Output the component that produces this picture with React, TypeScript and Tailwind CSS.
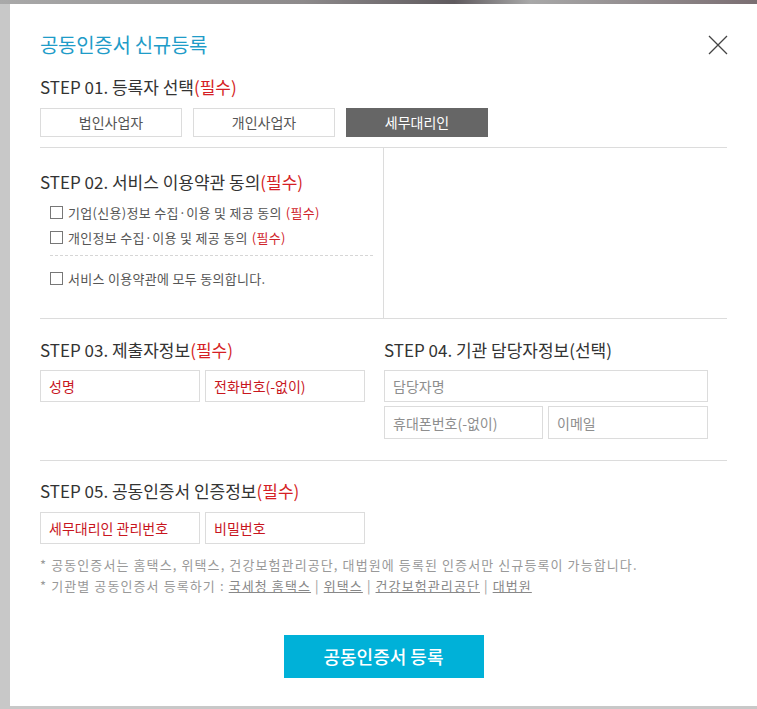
import { useState } from 'react';

const registrants = ['법인사업자', '개인사업자', '세무대리인'];

function Req({ small }: { small?: boolean }) {
  return <span className={small ? 'text-[#d0242b]' : 'text-[#d51f26]'}>(필수)</span>;
}

function Field({ placeholder, required, className }: { placeholder: string; required?: boolean; className?: string }) {
  return (
    <input
      placeholder={placeholder}
      className={`border border-[#dcdcdc] pl-[8px] text-[14px] outline-none ${
        required ? 'placeholder:text-[#c8161e]' : 'placeholder:text-[#8e8e8e]'
      } ${className || ''}`}
    />
  );
}

function Check({ label, required }: { label: string; required?: boolean }) {
  return (
    <label className="flex items-center h-[25px] text-[13px] text-[#555] tracking-[0.3px]">
      <span className="w-[13px] h-[13px] border border-[#777] mr-[5px] bg-white" />
      {label}
      {required && (
        <span className="ml-[4px]">
          <Req small />
        </span>
      )}
    </label>
  );
}

export default function App() {
  const [who, setWho] = useState(2);

  return (
    <div
      className="w-[757px] h-[709px] overflow-hidden bg-[#c8c8c8]"
      style={{ fontFamily: '"Noto Sans CJK KR", "Noto Sans", sans-serif' }}
    >
      {/* dimmed page strip behind the modal */}
      <div className="h-[4px] bg-[linear-gradient(90deg,#a9a9a9,#8d8a8b_40%,#5f5a5e_60%,#a8a8a8_70%,#7a6e72)]" />
      <div className="pl-[10px]">
        <div className="relative w-[747px] h-[702px] bg-white px-[30px] pt-[26px]">
          {/* Title */}
          <h1 className="h-[30px] leading-[30px] text-[20px] text-[#1f9cc8] tracking-[-0.3px]">
            공동인증서 신규등록
          </h1>
          <button className="absolute right-[29px] top-[31px] w-[20px] h-[20px]">
            <svg viewBox="0 0 20 20" className="w-[20px] h-[20px]" fill="none" stroke="#444" strokeWidth="1.3">
              <path d="M1 1 L19 19 M19 1 L1 19" />
            </svg>
          </button>

          {/* Step 01 */}
          <h2 className="mt-[15px] h-[24px] leading-[24px] text-[17px] text-[#333]">
            STEP 01. 등록자 선택<Req />
          </h2>
          <div className="flex gap-[11px] mt-[9px]">
            {registrants.map((r, i) => (
              <button
                key={r}
                onClick={() => setWho(i)}
                className={`w-[142px] h-[29px] text-[14px] ${
                  who === i ? 'bg-[#666] text-white' : 'border border-[#dcdcdc] text-[#555]'
                }`}
              >
                {r}
              </button>
            ))}
          </div>

          {/* Step 02 */}
          <div className="mt-[10px] flex border-t border-b border-[#dcdcdc] h-[172px]">
            <div className="w-[344px] border-r border-[#dcdcdc] pt-[22px]">
              <h2 className="h-[24px] leading-[24px] text-[17px] text-[#333]">
                STEP 02. 서비스 이용약관 동의<Req />
              </h2>
              <div className="mt-[6px] pl-[10px] pr-[10px]">
                <Check label="기업(신용)정보 수집·이용 및 제공 동의" required />
                <Check label="개인정보 수집·이용 및 제공 동의" required />
                <div className="mt-[5px] border-t border-dashed border-[#d6d6d6]" />
                <div className="mt-[10px]">
                  <Check label="서비스 이용약관에 모두 동의합니다." />
                </div>
              </div>
            </div>
            <div className="flex-1" />
          </div>

          {/* Step 03 / 04 */}
          <div className="flex border-b border-[#dcdcdc] h-[142px] pt-[19px]">
            <div className="w-[344px]">
              <h2 className="h-[24px] leading-[24px] text-[17px] text-[#333]">
                STEP 03. 제출자정보<Req />
              </h2>
              <div className="flex gap-[5px] mt-[8px]">
                <Field placeholder="성명" required className="w-[160px] h-[32px]" />
                <Field placeholder="전화번호(-없이)" required className="w-[160px] h-[32px]" />
              </div>
            </div>
            <div className="w-[324px]">
              <h2 className="h-[24px] leading-[24px] text-[17px] text-[#333]">
                STEP 04. 기관 담당자정보(선택)
              </h2>
              <div className="flex flex-col gap-[4px] mt-[8px]">
                <Field placeholder="담당자명" className="w-[324px] h-[32px]" />
                <div className="flex gap-[5px]">
                  <Field placeholder="휴대폰번호(-없이)" className="w-[159px] h-[33px]" />
                  <Field placeholder="이메일" className="w-[160px] h-[33px]" />
                </div>
              </div>
            </div>
          </div>

          {/* Step 05 */}
          <div className="pt-[18px]">
            <h2 className="h-[24px] leading-[24px] text-[17px] text-[#333]">
              STEP 05. 공동인증서 인증정보<Req />
            </h2>
            <div className="flex gap-[5px] mt-[9px]">
              <Field placeholder="세무대리인 관리번호" required className="w-[160px] h-[32px]" />
              <Field placeholder="비밀번호" required className="w-[160px] h-[32px]" />
            </div>
            <div className="mt-[10px] text-[13px] leading-[21px] text-[#999] tracking-[1.1px]">
              <p>* 공동인증서는 홈택스, 위택스, 건강보험관리공단, 대법원에 등록된 인증서만 신규등록이 가능합니다.</p>
              <p>
                * 기관별 공동인증서 등록하기 : <a className="underline text-[#888]">국세청 홈택스</a> |{' '}
                <a className="underline text-[#888]">위택스</a> | <a className="underline text-[#888]">건강보험관리공단</a> |{' '}
                <a className="underline text-[#888]">대법원</a>
              </p>
            </div>
            <div className="flex justify-center mt-[39px]">
              <button className="w-[200px] h-[43px] bg-[#00b1d8] text-white text-[18px] font-medium">
                공동인증서 등록
              </button>
            </div>
          </div>
        </div>
      </div>
    </div>
  );
}
